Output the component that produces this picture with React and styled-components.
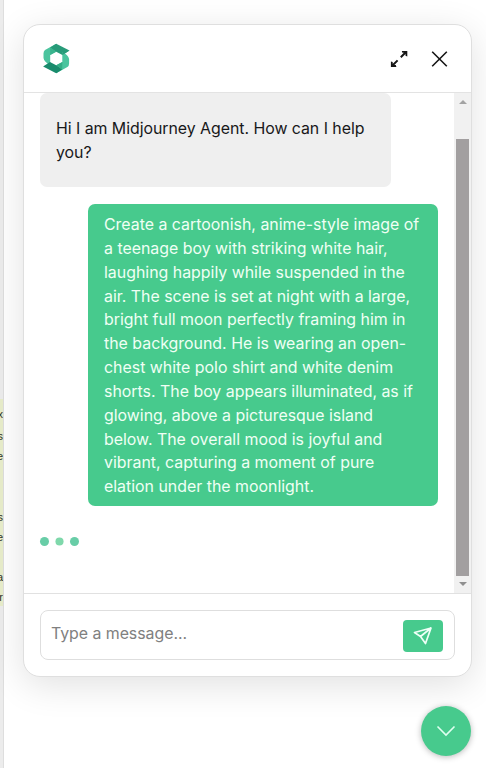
import React from "react";
import styled, { createGlobalStyle } from "styled-components";

const GlobalStyle = createGlobalStyle`
  *, *::before, *::after { box-sizing: border-box; }
  body { margin: 0; background: #fff; overflow: hidden; font-family: Inter, sans-serif; }
`;

const Page = styled.div`
  display: flex;
  width: 486px;
  height: 768px;
  overflow: hidden;
  background: #fff;
`;

const PageEdge = styled.aside`
  flex: none;
  width: 4px;
  height: 768px;
  padding-top: 399px;
  background: #ececec;
  border-right: 1px solid #dedede;
  overflow: hidden;
`;

const Note = styled.div`
  height: 207px;
  padding-top: 5px;
  background: #e8edcb;
  overflow: hidden;
`;

const NoteLine = styled.div`
  display: flex;
  justify-content: flex-end;
  width: 3px;
  height: 20px;
  margin-top: ${(p) => p.$gap || 0}px;
  font: 11px/20px "Liberation Sans", sans-serif;
  color: #33352a;
`;

const Main = styled.main`
  display: flex;
  flex-direction: column;
  align-items: flex-end;
  width: 482px;
  padding: 24px 14px 0 0;
`;

const Widget = styled.section`
  display: flex;
  flex-direction: column;
  width: 449px;
  height: 653px;
  border: 1px solid #dfdfdf;
  border-radius: 17px;
  background: #fff;
  box-shadow: 0 8px 36px rgba(0, 0, 0, 0.12);
  overflow: hidden;
`;

const Header = styled.header`
  display: flex;
  align-items: center;
  flex: none;
  height: 68px;
  padding: 0 22px 0 18px;
  border-bottom: 1px solid #e3e3e3;
`;

const Actions = styled.div`
  display: flex;
  align-items: center;
  gap: 20px;
  margin-left: auto;
`;

const IconButton = styled.button`
  display: grid;
  place-items: center;
  width: 20px;
  height: 20px;
  padding: 0;
  border: 0;
  background: none;
  color: #161616;
`;

const Body = styled.div`
  display: flex;
  flex: none;
  height: 500px;
`;

const Messages = styled.div`
  display: flex;
  flex-direction: column;
  flex: 1;
  padding: 0 16px;
`;

const AgentBubble = styled.p`
  width: 351px;
  height: 94px;
  margin: 0;
  padding: 24px 16px;
  border-radius: 7px;
  background: #efefef;
  color: #18181a;
  font-size: 15.9px;
  letter-spacing: -0.04px;
  line-height: 23.85px;
`;

const UserBubble = styled.p`
  align-self: flex-end;
  width: 350px;
  height: 302px;
  margin: 17px 0 0;
  padding: 9px 16px;
  border-radius: 7px;
  background: #47ca8d;
  color: #effff4;
  font-size: 15.9px;
  line-height: 23.85px;
  white-space: nowrap;
`;

const Typing = styled.div`
  display: flex;
  align-items: center;
  gap: 6px;
  margin: 31px 0 0;
`;

const Dot = styled.span`
  width: 9px;
  height: 9px;
  border-radius: 50%;
  background: ${(p) => (p.$light ? "#7fd8ab" : "#68cda7")};
  transform: scale(${(p) => (p.$light ? 0.9 : 1)});
`;

const Scrollbar = styled.div`
  display: flex;
  flex-direction: column;
  align-items: center;
  width: 17px;
  height: 500px;
  background: #f1f1f1;
`;

const Arrow = styled.span`
  width: 0;
  height: 0;
  margin-top: ${(p) => (p.$down ? 6 : 7)}px;
  border: 4px solid transparent;
  border-top: ${(p) => (p.$down ? "4px solid #8f8f8f" : "0")};
  border-bottom: ${(p) => (p.$down ? "0" : "4px solid #a3a3a3")};
`;

const Thumb = styled.div`
  width: 13px;
  height: 437px;
  margin-top: 35px;
  background: #a29fa0;
`;

const Footer = styled.footer`
  flex: 1;
  padding: 16px 16px 0;
  border-top: 1px solid #e1e1e1;
`;

const Composer = styled.div`
  display: flex;
  align-items: center;
  height: 50px;
  padding: 1px 11px 0 10px;
  border: 1px solid #dedede;
  border-radius: 8px;
`;

const Field = styled.input`
  flex: 1;
  min-width: 0;
  height: 24px;
  margin-bottom: 4px;
  padding: 0;
  border: 0;
  outline: 0;
  background: none;
  color: #222;
  font: 15.9px Inter, sans-serif;
  letter-spacing: -0.04px;
  &::placeholder { color: #808080; opacity: 1; }
`;

const Send = styled.button`
  display: grid;
  place-items: center;
  width: 40px;
  height: 32px;
  padding: 0;
  border: 0;
  border-radius: 4px;
  background: #47ca8d;
  color: #effff7;
`;

const Launcher = styled.button`
  display: grid;
  place-items: center;
  flex: none;
  width: 50px;
  height: 50px;
  margin: 29px 1px 0 0;
  padding: 0;
  border: 0;
  border-radius: 50%;
  background: #47ca8d;
  color: #dffff0;
  box-shadow: 0 1px 6px rgba(0, 0, 0, 0.28);
`;

const prompt = [
  "Create a cartoonish, anime-style image of",
  "a teenage boy with striking white hair,",
  "laughing happily while suspended in the",
  "air. The scene is set at night with a large,",
  "bright full moon perfectly framing him in",
  "the background. He is wearing an open-",
  "chest white polo shirt and white denim",
  "shorts. The boy appears illuminated, as if",
  "glowing, above a picturesque island",
  "below. The overall mood is joyful and",
  "vibrant, capturing a moment of pure",
  "elation under the moonlight.",
];

const Logo = () => (
  <svg width="30" height="32" viewBox="0.5 0.5 30 32" aria-label="Logo">
    <path d="M14.7 1.2L3.5 7.5Q2 8.5 2 11V15.5Q2.6 19.5 8.7 22.5V12.5L14.7 9.2Z" fill="#4bc49e" />
    <path d="M14.7 1.2L28 8L20.9 12.5L14.7 9.2L8.7 5Z" fill="#289b79" />
    <path d="M8.7 5L14.7 9.2L8.7 12.5Z" fill="#39b48d" />
    <path d="M14.7 30.8L25.9 24.5Q27.6 23.5 27.6 21V16.5Q26.8 12.5 20.8 9.5V19.5L14.7 22.8Z" fill="#4bc49e" />
    <path d="M20.9 12.5L28 8L20.8 10Z" fill="#289b79" />
    <path d="M14.7 30.8L1.6 24L8.5 19.5L14.7 22.8L20.7 27Z" fill="#198b6c" />
    <path d="M20.7 27L14.7 22.8L20.8 19.5Z" fill="#35ad86" />
  </svg>
);

export default function App() {
  return (
    <>
      <GlobalStyle />
      <Page>
        <PageEdge>
          <Note>
            <NoteLine>x</NoteLine>
            <NoteLine $gap={2}>s</NoteLine>
            <NoteLine>e</NoteLine>
            <NoteLine $gap={41}>s</NoteLine>
            <NoteLine>e</NoteLine>
            <NoteLine $gap={20}>a</NoteLine>
            <NoteLine>r</NoteLine>
          </Note>
        </PageEdge>
        <Main>
          <Widget>
            <Header>
              <Logo />
              <Actions>
                <IconButton aria-label="Expand">
                  <svg width="20" height="20" viewBox="-1 0 20 20" fill="none" stroke="currentColor" strokeWidth="2">
                    <path d="M10.8 8.2L16 3M7.6 11.4L2.2 16.8" />
                    <path d="M11.8 1.9H17.3V7.4L15.5 6.8V3.7H12.4ZM0.9 12.4V17.9H6.4L5.8 16.1H2.7V13Z" fill="currentColor" stroke="none" />
                    <path d="M12.8 2.2H17V6.4ZM1.2 13.4V17.6H5.4Z" fill="currentColor" stroke="none" />
                  </svg>
                </IconButton>
                <IconButton aria-label="Close">
                  <svg width="20" height="20" viewBox="-0.5 0 20 20" fill="none" stroke="currentColor" strokeWidth="1.6">
                    <path d="M2.7 2.7L17.3 17.3M17.3 2.7L2.7 17.3" />
                  </svg>
                </IconButton>
              </Actions>
            </Header>
            <Body>
              <Messages>
                <AgentBubble>Hi I am Midjourney Agent. How can I help you?</AgentBubble>
                <UserBubble>
                  {prompt.map((line) => (
                    <React.Fragment key={line}>{line}<br /></React.Fragment>
                  ))}
                </UserBubble>
                <Typing><Dot /><Dot $light /><Dot /></Typing>
              </Messages>
              <Scrollbar><Arrow /><Thumb /><Arrow $down /></Scrollbar>
            </Body>
            <Footer>
              <Composer>
                <Field placeholder="Type a message..." />
                <Send aria-label="Send">
                  <svg width="20" height="20" viewBox="0 0 20 20" fill="none" stroke="currentColor" strokeWidth="1.7" strokeLinejoin="round">
                    <path d="M18 2L1.5 6.5L7.5 10.5L12.5 17.5L18 2ZM7.5 10.5L18 2" />
                  </svg>
                </Send>
              </Composer>
            </Footer>
          </Widget>
          <Launcher aria-label="Minimize">
            <svg width="20" height="20" viewBox="0 0 20 20" fill="none" stroke="currentColor" strokeWidth="1.6">
              <path d="M1.5 5.5L10 14L18.5 5.5" />
            </svg>
          </Launcher>
        </Main>
      </Page>
    </>
  );
}
